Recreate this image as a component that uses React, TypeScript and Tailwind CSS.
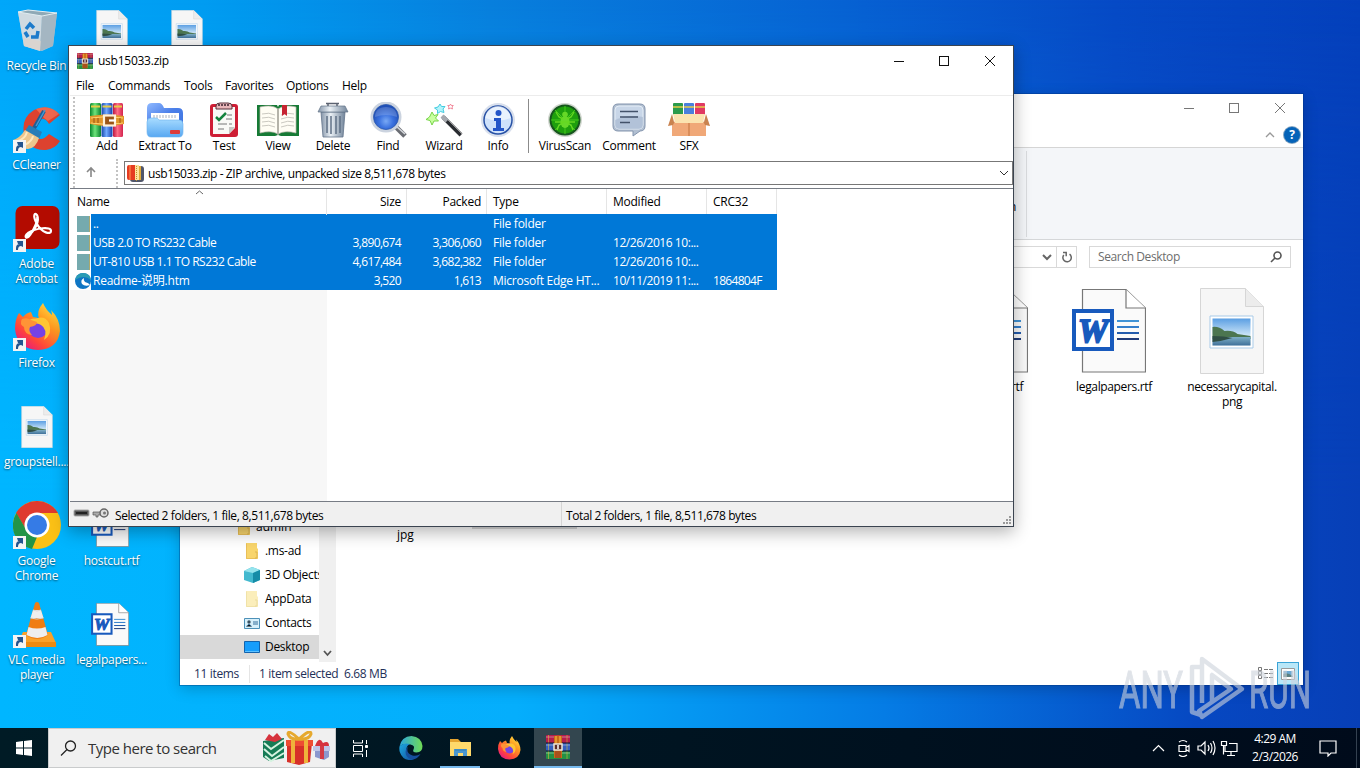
import type { ReactNode } from 'react';

const FONT = "font-['Open_Sans','Noto_Sans_CJK_SC',sans-serif]";

function Books({ className = '' }: { className?: string }) {
  return (
    <svg viewBox="0 0 24 24" className={className}>
      <rect y="0" width="24" height="8" rx="1" fill="#b51d4c" />
      <rect y="8" width="24" height="8" rx="1" fill="#345fc0" />
      <rect y="16" width="24" height="8" rx="1" fill="#239144" />
      <path d="M0 2h24M0 10h24M0 18h24" stroke="#fff" strokeOpacity=".2" strokeWidth="2" />
      <path d="M2.500 0v24M21 0v24" stroke="#e0bd3c" strokeWidth=".8" strokeOpacity=".7" />
      <path d="M0 8h24M0 16h24" stroke="#12162e" strokeWidth="1.200" />
      <path d="M8 1q4-1 8 0v22H8z" fill="#c96b17" />
      <path d="M10 1v8M14 1v8" stroke="#ffbe46" />
      <path d="M9 16h6v7H9z" fill="#a9501c" />
      <rect x="8" y="9" width="8" height="6" fill="#5c2d2a" stroke="#eee7d9" strokeWidth="1.5" />
      <path d="M12 10v4" stroke="#fff" strokeWidth="1.5" />
    </svg>
  );
}

function AddIcon() {
  return (
    <svg viewBox="0 0 36 36" className="size-9">
      <defs>
        <linearGradient id="book-g"><stop stopColor="#08852d" /><stop offset=".45" stopColor="#6ee47b" /><stop offset="1" stopColor="#08802d" /></linearGradient>
        <linearGradient id="book-b"><stop stopColor="#1748aa" /><stop offset=".45" stopColor="#70a9ff" /><stop offset="1" stopColor="#173fad" /></linearGradient>
        <linearGradient id="book-r"><stop stopColor="#bc1741" /><stop offset=".45" stopColor="#ff6d86" /><stop offset="1" stopColor="#d3244f" /></linearGradient>
      </defs>
      <rect x="1" y="1" width="11" height="34" rx="1.5" fill="url(#book-g)" />
      <rect x="12.5" y="1" width="11" height="34" rx="1.5" fill="url(#book-b)" />
      <rect x="24" y="1" width="10" height="34" rx="1.5" fill="url(#book-r)" />
      <path d="M2 4.500h9M13.500 4.500h9M25 4.500h8" stroke="#e7cb47" strokeWidth="2" />
      <path d="M1 14q17-3 34 0v8q-17 4-34 0z" fill="#e0952a" />
      <path d="M2 16q16-3 32 0M2 21q16 3 32 0" fill="none" stroke="#ffd370" />
      <rect x="15" y="13.500" width="11" height="10" fill="#9b5516" stroke="#fff1d7" strokeWidth="2.2" />
      <path d="M20 18.500h7" stroke="#fff" strokeWidth="2.2" />
      <path d="M5 16v5M9 16v5M31 16v5" stroke="#9a5213" />
    </svg>
  );
}

function ExtractIcon() {
  return (
    <svg viewBox="0 0 38 36" className="w-[38px] h-9">
      <defs>
        <linearGradient id="folder" x2="0" y2="1"><stop stopColor="#a8dcff" /><stop offset="1" stopColor="#58a8f2" /></linearGradient>
        <linearGradient id="folder-back" x2="1" y2="1"><stop stopColor="#8fb9ff" /><stop offset=".5" stopColor="#4b7fe9" /><stop offset="1" stopColor="#3f74df" /></linearGradient>
      </defs>
      <path d="M1 6q0-5 5-5h7q3 0 5 5h14q5 0 5 5v15H1z" fill="url(#folder-back)" />
      <path d="M5 11h28v14H5z" fill="#fff" />
      <path d="M8 13v3m3-3v3m3-3v3m3-3v3m3-3v3m3-3v3m3-3v3m3-3v3" stroke="#a8b0bd" />
      <path d="M1 20q0-4 4-4h5q2 0 3 2h20q4 0 4 4v8q0 5-4 5H5q-4 0-4-5z" fill="url(#folder)" stroke="#6db3ee" strokeWidth=".6" />
      <rect x="24" y="28" width="10" height="4" rx="1" fill="#dd3b3b" />
    </svg>
  );
}

function TestIcon() {
  return (
    <svg viewBox="0 0 30 36" className="w-[30px] h-9">
      <rect x="1" y="2" width="28" height="33" rx="3" fill="#ce1e35" />
      <path d="M4 5h22v21l-6 6H4z" fill="#f9f9f6" />
      <path d="M26 25h-6v7z" fill="#c7c7c4" />
      <path d="M7 4q0-3 4-3h8q4 0 4 3v3H7z" fill="#e9b6b9" stroke="#56313a" />
      <path d="M9 3h12" stroke="#664751" strokeWidth="2" strokeDasharray="2 1" />
      <path d="M7 15l3 3 7-7" fill="none" stroke="#14833d" strokeWidth="2.5" />
      <path d="M18 13h5M17 17h6M9 22h9m2 0h3M9 27h6" stroke="#777" />
    </svg>
  );
}

function ViewIcon() {
  return (
    <svg viewBox="0 0 44 36" className="w-11 h-9">
      <path d="M1 3h20l1 2 1-2h20v31H25l-3-1-3 1H1z" fill="#167a35" />
      <path d="M4 5q12-3 18 2v25q-7-4-18-1zM22 7q7-5 18-2v26q-11-3-18 1z" fill="#fffdf4" stroke="#b8b4a9" strokeWidth=".7" />
      <path d="M6 12q7-2 13 1M6 16q7-2 13 1M6 20q7-2 13 1M6 24q7-2 13 1M25 13q7-3 13-1M25 17q7-3 13-1M25 21q7-3 13-1M25 25q7-3 13-1" fill="none" stroke="#cbc9c1" />
      <path d="M22 7v26" stroke="#aaa99e" strokeWidth="1.500" />
      <path d="M26 3h5v11l-2.5-2-2.5 2z" fill="#c72431" />
    </svg>
  );
}

function TrashIcon() {
  return (
    <svg viewBox="0 0 32 36" className="w-8 h-9">
      <defs><linearGradient id="steel"><stop stopColor="#8494a8" /><stop offset=".4" stopColor="#eaf0f5" /><stop offset="1" stopColor="#71849a" /></linearGradient></defs>
      <path d="M9 1.500h13M11 1v3m9-3v3" fill="none" stroke="#5b6270" strokeWidth="1.500" />
      <path d="M4 10h24l-2 25H6z" fill="url(#steel)" stroke="#62748a" strokeWidth=".8" />
      <path d="M10 14v17m4-17v18m5-18v18m4-18v17" stroke="#5f7085" strokeWidth="1.500" />
      <path d="M4 4h24l3 6H1z" fill="url(#steel)" stroke="#617287" strokeWidth=".7" />
    </svg>
  );
}

function FindIcon() {
  return (
    <svg viewBox="0 0 38 36" className="w-[38px] h-9">
      <defs><radialGradient id="lens" cx=".5" cy=".65"><stop stopColor="#79a9f5" /><stop offset=".5" stopColor="#3b72df" /><stop offset="1" stopColor="#1f4fb8" /></radialGradient></defs>
      <path d="M27 25l9 9" stroke="#6a6d73" strokeWidth="5" /><path d="M27 24l9 8" stroke="#d3d6da" strokeWidth="1.600" />
      <circle cx="17" cy="15" r="14" fill="url(#lens)" stroke="#cbd3df" strokeWidth="3" />
      <circle cx="17" cy="15" r="12.500" fill="none" stroke="#2b58ac" strokeWidth=".8" />
      <path d="M6 15q0-10 11-10t11 10q-11-4-22 0" fill="#fff" fillOpacity=".18" />
    </svg>
  );
}

function WizardIcon() {
  return (
    <svg viewBox="0 0 38 36" className="w-[38px] h-9">
      <path d="M18 15l18 18" stroke="#292c31" strokeWidth="4" /><path d="M19 14l18 18" stroke="#999" />
      <path d="M17 14l5 5" stroke="#a6a9af" strokeWidth="4" />
      <path d="M7 10l2 3.500 4-1-2.500 3.500 3 3-4.500 0-2 4-2-4.500-4-1 3.500-2.500z" fill="#c8ff9f" stroke="#79d54a" />
      <path d="M15 2l1.500 2.500h3.500l-2 2.500 1 3.500-3.500-1-3 2v-3.500l-3-2 3.500-1z" fill="#b3f4fb" stroke="#45cce0" />
      <path d="M25.500 2l.8 1.500h2l-1.300 1.500.5 2-2-.8-2 .8.500-2-1.300-1.500h2z" fill="#fff" stroke="#ed7186" strokeWidth=".8" />
    </svg>
  );
}

function InfoIcon() {
  return (
    <svg viewBox="0 0 36 36" className="size-9">
      <circle cx="18" cy="18" r="17" fill="#d9e0ed" /><circle cx="18" cy="18" r="14" fill="#cfe2fb" stroke="#2751a5" strokeWidth="1.5" />
      <path d="M5.500 16a12.500 12 0 0125 0q-12 5-25 0" fill="#fff" fillOpacity=".55" />
      <circle cx="18.5" cy="11" r="3" fill="#2456c8" /><path d="M14 16h7v10h3v3H13v-3h3v-7h-2z" fill="#2456c8" />
    </svg>
  );
}

function VirusIcon() {
  return (
    <svg viewBox="0 0 36 36" className="size-9">
      <circle cx="18" cy="18" r="17" fill="#d1d6cf" /><circle cx="18" cy="18" r="14.500" fill="#1e9f0d" stroke="#16561d" strokeWidth="2" />
      <path d="M18 4v28M4 18h28M8 8l20 20M28 8L8 28" stroke="#4ed522" strokeWidth=".8" />
      <ellipse cx="18" cy="20" rx="4.500" ry="6" fill="#66d829" /><circle cx="18" cy="12.500" r="2.800" fill="#66d827" />
      <path d="M9 10l3 5 4 2M27 10l-3 5-4 2M8 20h20M10 28l2-5 4-2M26 28l-2-5-4-2" fill="none" stroke="#66d822" strokeWidth="1.4" />
    </svg>
  );
}

function CommentIcon() {
  return (
    <svg viewBox="0 0 36 36" className="size-9">
      <path d="M7 2h22q5 0 5 5v17q0 5-5 5l-7 5v-5H7q-5 0-5-5V7q0-5 5-5z" fill="#b1bfd1" stroke="#8495ae" />
      <path d="M8 4h20q4 0 4 4v15q0 4-4 4H8q-4 0-4-4V8q0-4 4-4z" fill="#c8d6e8" stroke="#e5eef7" />
      <path d="M4 18q14-6 28-3v8q0 4-4 4H8q-4 0-4-4z" fill="#91a5c1" fillOpacity=".4" />
      <path d="M9 9.500h18M9 15h18M9 20.500h10" stroke="#435269" strokeWidth="1.6" />
    </svg>
  );
}

function SfxIcon() {
  return (
    <svg viewBox="0 0 42 36" className="w-[42px] h-9">
      <rect x="5" y="1" width="10" height="12" rx="1" fill="#2c9b4c" /><rect x="16" y="1" width="10" height="12" rx="1" fill="#4a80dd" /><rect x="27" y="1" width="10" height="12" rx="1" fill="#e03a63" />
      <path d="M5 5h10M16 5h10M27 5h10" stroke="#e6cb48" strokeWidth="1.500" />
      <path d="M4 20h34v14H4z" fill="#f0a878" />
      <path d="M4 12L0 24l5-1 2-4h28l2 4 5 1-4-12-2 8H6z" fill="#c9834f" />
      <path d="M5 12h32l-2 9H7z" fill="#fbe3b0" /><path d="M21 21v13" stroke="#c3723c" />
    </svg>
  );
}

function PhotoFile({ className = '' }: { className?: string }) {
  return (
    <svg viewBox="0 0 64 86" className={className}>
      <defs>
        <linearGradient id="sky" x2="0" y2="1"><stop stopColor="#5b9fe3" /><stop offset=".7" stopColor="#dbeefa" /></linearGradient>
        <linearGradient id="lake" x2="0" y2="1"><stop stopColor="#7fb0c8" /><stop offset="1" stopColor="#3f7099" /></linearGradient>
      </defs>
      <path d="M.5.5h45l18 18v67H.5z" fill="#f6f6f6" stroke="#d6d6d6" />
      <path d="M45.5.5v18h18" fill="#ececec" stroke="#d6d6d6" />
      <path d="M10 28h43v32H10z" fill="#fff" stroke="#a9cbe8" />
      <path d="M12.500 30.500h38v27h-38z" fill="url(#sky)" />
      <path d="M12.500 39q6-1 12 4 8-1 13 3l13 2v3h-38z" fill="#4c7650" />
      <path d="M12.500 49h38v8.500h-38z" fill="url(#lake)" /><path d="M12.500 48q12 0 20 2-10 3-20 4z" fill="#304f45" />
    </svg>
  );
}

function WordFile({ className = '' }: { className?: string }) {
  return (
    <svg viewBox="0 0 74 84" className={className}>
      <path d="M10.5.5H54L73.5 19v64h-63z" fill="#fafafa" stroke="#777" strokeWidth="1.2" />
      <path d="M54 .5V19h19.5" fill="#fff" stroke="#777" strokeWidth="1.2" />
      <path d="M45 32h22" stroke="#4193d5" strokeWidth="2" /><path d="M45 38h22" stroke="#347fcc" strokeWidth="2" />
      <path d="M45 44h22" stroke="#245cad" strokeWidth="2" /><path d="M45 50h22" stroke="#203b79" strokeWidth="2" />
      <rect x="2" y="22" width="38" height="38" fill="#fff" stroke="#185abd" strokeWidth="4" />
      <text x="21" y="52.500" textAnchor="middle" fontFamily="Liberation Serif" fontWeight="700" fontStyle="italic" fontSize="34" fill="#185abd" stroke="#185abd" strokeWidth="2">W</text>
    </svg>
  );
}

function RecycleIcon() {
  return (
    <svg viewBox="0 0 48 48" className="size-12">
      <path d="M5 6l10-2 29 3-4 33-11 5-18-5z" fill="#bac9d2" fillOpacity=".85" />
      <path d="M5 6l24 4-2 35-16-5z" fill="#cfdae1" /><path d="M29 10l15-3-4 33-13 5z" fill="#a4b6c2" />
      <path d="M5 6l10-2 29 3-15 3z" fill="#8fa9b6" stroke="#e2edf1" />
      <path d="M10 32l18 3-1 10-16-5z" fill="#ddd2c9" fillOpacity=".7" />
      <g fill="none" stroke="#1c7bcb" strokeWidth="3.500"><path d="M13 23l4-5 4 4" /><path d="M25 25l-1 6-6 0" /><path d="M15 31l-3-5" /></g>
    </svg>
  );
}

function CCleanerIcon() {
  return (
    <svg viewBox="0 0 48 48" className="size-12">
      <path d="M47 10Q36-2 21 5 8 13 11 29q5 17 22 16 9-1 14-9l-11-7q-9 10-15 0-2-13 6-15 6-1 9 5z" fill="#dd422f" />
      <path d="M23 4q14-5 23 5l-11 7-4-3" fill="#ef674e" />
      <path d="M31 6L20 25" stroke="#1c5f97" strokeWidth="4" /><path d="M32 5L23 21" stroke="#4698cf" strokeWidth="1.5" />
      <path d="M16 20l13 7-3 7-14-8z" fill="#287db8" />
      <path d="M12 25l14 8q-3 10-11 11Q5 44 0 35q7-2 12-10z" fill="#edc68d" />
      <path d="M5 36q7-2 9-9M12 40q7-4 8-9" fill="none" stroke="#ffe8bd" strokeWidth="2" />
    </svg>
  );
}

function AcrobatIcon() {
  return (
    <svg viewBox="0 0 48 48" className="size-12">
      <rect x="2.500" y="2" width="44" height="43" rx="7" fill="#b30b00" />
      <path d="M13 33C22 28 27 17 24 11c-2-3-5 0 0 9s14 11 14 7c0-5-15-3-23 2-5 4-1 7 2 2 5-7 8-15 7-18" fill="none" stroke="#fff" strokeWidth="2.2" strokeLinejoin="round" />
    </svg>
  );
}

function FirefoxIcon({ className = '' }: { className?: string }) {
  return (
    <svg viewBox="0 0 48 48" className={className}>
      <defs>
        <linearGradient id="fox" x1="1" y1="0" x2=".2" y2="1"><stop stopColor="#fff44f" /><stop offset=".4" stopColor="#ff9a20" /><stop offset=".75" stopColor="#ff453a" /><stop offset="1" stopColor="#e31587" /></linearGradient>
      </defs>
      <path d="M30 0q3 7 9 12 0-3-1-5 9 9 9 21Q45 46 25 47 4 46 2 26q0-10 4-16l4 4q3-4 8-5l2 5q4 0 6 2Q23 8 30 0z" fill="url(#fox)" />
      <circle cx="25" cy="25" r="10" fill="#7542e5" />
      <path d="M25 15q7-2 11 5 4 11-5 17 4-11-3-15-4-3-9 0-1-4-5-4 5-3 11-3z" fill="#ffc533" />
      <path d="M9 16q5-2 9 1l6 2q0 4-7 5-2 4 2 8-8-1-8-8-5-3-2-8z" fill="#ff9336" />
    </svg>
  );
}

function ChromeIcon() {
  return (
    <svg viewBox="0 0 48 48" className="size-12">
      <circle cx="24" cy="24" r="24" fill="#fbc116" />
      <path d="M24 0a24 24 0 0121 12H24a12 12 0 00-10 18L3 12A24 24 0 0124 0z" fill="#df3a2f" />
      <path d="M3.4 12L14 30a12 12 0 0010 6l-5 12A24 24 0 013.400 12z" fill="#239447" />
      <circle cx="24" cy="24" r="12.500" fill="#fff" /><circle cx="24" cy="24" r="10" fill="#357be6" />
    </svg>
  );
}

function VlcIcon() {
  return (
    <svg viewBox="0 0 48 48" className="size-12">
      <path d="M10 32h28l5 11H5z" fill="#f9a12a" /><path d="M5 42h38v5H5z" fill="#ee8a10" />
      <path d="M22 3q2-2 4 0l9 32q-11 8-22 0z" fill="#f07d12" />
      <path d="M20 10h8l2.500 8h-13zM15.500 27q8.500 3 17 0l2 8q-10 6-21 0z" fill="#eee" />
      <path d="M20 10q4 2 8 0M17.500 18q6 2 13 0" stroke="#d7d7d7" fill="none" />
    </svg>
  );
}

function EdgeIcon({ className = '' }: { className?: string }) {
  return (
    <svg viewBox="0 0 48 48" className={className}>
      <defs>
        <linearGradient id="edge-top" x2="1"><stop stopColor="#2aa5df" /><stop offset="1" stopColor="#70dc55" /></linearGradient>
        <linearGradient id="edge-low" x2="1" y2="1"><stop stopColor="#1eaae2" /><stop offset="1" stopColor="#124d9c" /></linearGradient>
      </defs>
      <path d="M1 21Q5 1 25 0q20 2 22 20 0 12-12 13-9 0-6-6 4-8-6-10Q8 14 1 21z" fill="url(#edge-top)" />
      <path d="M1 21q8-9 21-5-9 4-7 16 2 12 16 16Q8 51 2 33q-2-5-1-12z" fill="url(#edge-low)" />
      <path d="M18 21q-5 14 9 18 9 2 16-3-8 13-20 10Q9 39 15 25z" fill="#164f9d" />
    </svg>
  );
}

// the selected row shows a blue-tinted edge icon
function EdgeSelected() {
  return (
    <svg viewBox="0 0 16 16" className="ml-[5px] size-4 shrink-0">
      <circle cx="8" cy="8" r="8" fill="#0f76c4" />
      <path d="M0 7Q2 0 8 0q7 0 8 7-7-6-16 0z" fill="#2b9cb4" />
      <path d="M9 5Q5 7 7 11q3 3 8 1-1-2-5-3-2-2-1-4z" fill="#fff" />
    </svg>
  );
}

function Shortcut() {
  return (
    <svg viewBox="0 0 13 13" className="absolute bottom-0 left-0 size-[13px]">
      <rect width="13" height="13" fill="#f4f4f4" />
      <path d="M3 11V9q0-4 4-4H5l-1-3h6v6L8 7Q5 7 5 11z" fill="#24558f" />
    </svg>
  );
}

function DesktopItem({ icon, label, link }: { icon?: ReactNode; label?: string; link?: boolean }) {
  return (
    <div className="flex h-[99px] w-[75px] flex-col items-center">
      <div className="relative flex size-12 items-center justify-center">
        {icon}
        {link && <Shortcut />}
      </div>
      <div className="mt-1 whitespace-pre text-center text-[12px] leading-[15px] tracking-[-0.25px] text-white [text-shadow:0_1px_2px_rgba(0,0,0,.6)]">
        {label}
      </div>
    </div>
  );
}

function Desktop() {
  return (
    <div className="absolute left-[-1px] top-[6px] flex">
      <div className="flex flex-col">
        <DesktopItem icon={<RecycleIcon />} label="Recycle Bin" />
        <DesktopItem icon={<CCleanerIcon />} label="CCleaner" link />
        <DesktopItem icon={<AcrobatIcon />} label={'Adobe\nAcrobat'} link />
        <DesktopItem icon={<FirefoxIcon className="size-12" />} label="Firefox" link />
        <DesktopItem icon={<PhotoFile className="mt-[2px] h-[42px] w-8" />} label="groupstell...." />
        <DesktopItem icon={<ChromeIcon />} label={'Google\nChrome'} link />
        <DesktopItem icon={<VlcIcon />} label={'VLC media\nplayer'} link />
      </div>
      <div className="flex flex-col">
        <DesktopItem icon={<PhotoFile className="mt-[2px] h-[42px] w-8" />} />
        <DesktopItem />
        <DesktopItem />
        <DesktopItem />
        <DesktopItem />
        <DesktopItem icon={<WordFile className="mr-1 h-[43px] w-[38px]" />} label="hostcut.rtf" />
        <DesktopItem icon={<WordFile className="mr-1 h-[43px] w-[38px]" />} label="legalpapers..." />
      </div>
      <DesktopItem icon={<PhotoFile className="mt-[2px] h-[42px] w-8" />} />
    </div>
  );
}

function WindowButtons({ color }: { color: string }) {
  return (
    <svg width="102" height="12" viewBox="0 0 102 12" fill="none" stroke={color} shapeRendering="crispEdges">
      <path d="M0 6.500h10M45.500 1.500h9v9h-9z" />
      <path d="M91 1l10 10M101 1L91 11" shapeRendering="auto" />
    </svg>
  );
}

function SmallFolder({ pale }: { pale?: boolean }) {
  return (
    <svg viewBox="0 0 16 16" className="size-4 shrink-0">
      <path d="M2 0h11v5l1 1v10H2z" fill={pale ? '#fbeebb' : '#f8d56c'} />
      <path d="M2.500.5v15h10" fill="none" stroke={pale ? '#f0e2a8' : '#e9bf58'} />
      <path d="M11 9h2v6h-2" fill="none" stroke={pale ? '#eadb9e' : '#dcb34e'} />
    </svg>
  );
}

const tree = [
  { label: '.ms-ad', icon: <SmallFolder /> },
  {
    label: '3D Objects',
    icon: (
      <svg viewBox="0 0 16 16" className="size-4 shrink-0">
        <path d="M0 4l8-4 8 3v10l-7 3-9-3z" fill="#43b9cf" /><path d="M0 4l8-4 8 3-7 3z" fill="#96e4ed" /><path d="M9 6l7-3v10l-7 3z" fill="#168ca7" />
      </svg>
    ),
  },
  { label: 'AppData', icon: <SmallFolder pale /> },
  {
    label: 'Contacts',
    icon: (
      <svg viewBox="0 0 16 16" className="size-4 shrink-0">
        <path d="M.5 3.500h15v10H.5z" fill="#d7f0fb" stroke="#4d91b8" /><circle cx="5" cy="7" r="1.700" fill="#3b5262" /><path d="M2.500 11.500q2.500-4 5 0M9 7h5M9 9h5" stroke="#356f9b" />
      </svg>
    ),
  },
  {
    label: 'Desktop',
    icon: (
      <svg viewBox="0 0 16 16" className="size-4 shrink-0">
        <path d="M.5 2.500h15v11H.5z" fill="#169dfc" stroke="#1263ae" /><path d="M1 12.500h14" stroke="#5cc2ff" />
      </svg>
    ),
  },
];

function Explorer() {
  return (
    <div className="absolute left-[180px] top-[94px] flex h-[591px] w-[1123px] flex-col bg-white shadow-[0_0_0_1px_rgba(0,50,120,.35),0_4px_14px_rgba(0,0,0,.2)]">
      <div className="flex h-7 justify-end pr-[17px] pt-2">
        <WindowButtons color="#777" />
      </div>
      <div className="flex h-[26px] items-center justify-end gap-[9px] border-b border-[#d5d5d5] pr-[3px]">
        <svg width="10" height="6" fill="none" stroke="#999" strokeWidth="1.3"><path d="M1 5l4-4 4 4" /></svg>
        <span className="flex size-4 items-center justify-center rounded-full bg-[#0563b8] text-[12px] font-bold leading-none text-white ring-1 ring-[#084983]/50">?</span>
      </div>
      <div className="flex h-[92px] border-b border-[#d5d7d9] bg-[#f4f6f9]">
        <div className="mt-[3px] h-[86px] w-[847px] border-r border-[#dadcdf] pl-[829px] pt-[47px] text-[12px]">n</div>
      </div>
      <div className="flex h-[34px] items-center justify-end pr-3">
        <div className="flex h-[22px] w-[720px] items-center justify-end border border-[#d9d9d9]">
          <svg width="10" height="7" className="mr-1" fill="none" stroke="#666" strokeWidth="2"><path d="M1 1l4 4 4-4" /></svg>
          <div className="flex h-full w-5 items-center justify-center border-l border-[#d9d9d9]">
            <svg width="12" height="12" fill="none" stroke="#666" strokeWidth="1.500"><path d="M8.500 3.200A4.200 4.200 0 112.800 4M2 1.500h3.200v3.700" /></svg>
          </div>
        </div>
        <div className="ml-3 flex h-[22px] w-[202px] items-center justify-between border border-[#d9d9d9] pl-2 pr-2 text-[12px] tracking-[-0.4px] text-[#6d6d6d]">
          <span>Search Desktop</span>
          <svg width="12" height="12" fill="none" stroke="#555" strokeWidth="1.600"><circle cx="7.500" cy="4.500" r="3.500" /><path d="M5 7l-4 4" /></svg>
        </div>
      </div>
      <div className="flex min-h-0 flex-1">
        <div className="flex w-[139px] flex-col justify-end overflow-hidden pb-[3px] text-[12px] tracking-[-0.3px]">
          <div className="flex h-6 items-center gap-1 pl-14 tracking-normal"><SmallFolder />admin</div>
          {tree.map((item) => (
            <div
              key={item.label}
              className={`flex h-6 shrink-0 items-center gap-[5px] whitespace-nowrap pl-16 ${item.label === 'Desktop' ? 'bg-[#d9d9d9]' : ''}`}
            >
              {item.icon}
              {item.label}
            </div>
          ))}
        </div>
        <div className="flex w-[17px] flex-col items-center justify-end bg-[#f0f0f0] pb-[5px]">
          <svg width="9" height="7" fill="none" stroke="#555" strokeWidth="1.800"><path d="M1 1l3.500 4L8 1" /></svg>
        </div>
        <div className="flex flex-1 flex-col justify-between">
          <div className="flex justify-end pt-[14px] text-center text-[12px] leading-[15px] tracking-[-0.35px]">
            <div className="flex w-[118px] flex-col items-center">
              <WordFile className="mr-[11px] h-[86px] w-[74px]" />
              <span className="mt-[5px] w-full">hostcut.rtf</span>
            </div>
            <div className="flex w-[118px] flex-col items-center">
              <WordFile className="mr-[11px] h-[86px] w-[74px]" />
              <span className="mt-[5px]">legalpapers.rtf</span>
            </div>
            <div className="mr-[12px] flex w-[118px] flex-col items-center">
              <PhotoFile className="h-[86px] w-16" />
              <span className="mt-[5px]">necessarycapital.<br />png</span>
            </div>
          </div>
          <div className="flex h-[135px] items-start pl-[61px] text-[12px] leading-[15px]">
            <span>jpg</span>
            <div className="ml-[58px] h-[2px] w-[105px] bg-[#d9d9d9]" />
          </div>
        </div>
      </div>
      <div className="flex h-[23px] items-center pl-[14px] pr-[4px] text-[12px] tracking-[-0.35px] text-[#1e3058]">
        <span className="w-[55px]">11 items</span>
        <span className="w-[95px] whitespace-nowrap border-l border-[#e5e5e5] pl-[9px]">1 item selected</span>
        <span className="flex-1">6.68 MB</span>
        <svg width="17" height="13" className="mr-[3px]" fill="none" stroke="#777"><path d="M1.500.5h3v3h-3zM1.500 4.500h3v3h-3zM1.500 8.500h3v3h-3z" /><path d="M7 2.500h9M7 6.500h9M7 10.500h9" strokeDasharray="4 1" /></svg>
        <div className="flex h-full w-[22px] items-center justify-center border border-[#3ba4d7] bg-[#b9e7f8]">
          <svg width="14" height="12"><path d="M.5.5h13v11H.5z" fill="#fff" stroke="#999" /><path d="M2.500 3h9v6h-9z" fill="#6ba9d4" /><path d="M2.500 6q4-2 9 2v1h-9z" fill="#5a7f80" /></svg>
        </div>
      </div>
    </div>
  );
}

const actions = [
  { label: 'Add', icon: <AddIcon />, cell: 'w-[52px]' },
  { label: 'Extract To', icon: <ExtractIcon />, cell: 'w-[64px]' },
  { label: 'Test', icon: <TestIcon />, cell: 'w-[54px]' },
  { label: 'View', icon: <ViewIcon />, cell: 'w-[54px]' },
  { label: 'Delete', icon: <TrashIcon />, cell: 'w-[56px]' },
  { label: 'Find', icon: <FindIcon />, cell: 'w-[54px]' },
  { label: 'Wizard', icon: <WizardIcon />, cell: 'w-[58px]' },
  { label: 'Info', icon: <InfoIcon />, cell: 'w-[50px]' },
];

const scanActions = [
  { label: 'VirusScan', icon: <VirusIcon />, cell: 'w-[62px]' },
  { label: 'Comment', icon: <CommentIcon />, cell: 'w-[66px]' },
  { label: 'SFX', icon: <SfxIcon />, cell: 'w-[54px]' },
];

function Action({ label, icon, cell }: { label: string; icon: ReactNode; cell: string }) {
  return (
    <div className={`flex shrink-0 flex-col items-center ${cell}`}>
      {icon}
      <span className="whitespace-nowrap leading-[16px]">{label}</span>
    </div>
  );
}

const files = [
  ['..', '', '', 'File folder', '', ''],
  ['USB 2.0 TO RS232 Cable', '3,890,674', '3,306,060', 'File folder', '12/26/2016 10:...', ''],
  ['UT-810 USB 1.1 TO RS232 Cable', '4,617,484', '3,682,382', 'File folder', '12/26/2016 10:...', ''],
  ['Readme-说明.htm', '3,520', '1,613', 'Microsoft Edge HT...', '10/11/2019 11:...', '1864804F'],
];

const COLS = 'grid grid-cols-[257px_80px_80px_120px_100px_70px]';

function Archive() {
  return (
    <div className="absolute left-[68px] top-[45px] flex h-[482px] w-[946px] flex-col border border-[#3b4450] bg-white pl-px text-[12px] tracking-[-0.25px] text-black shadow-[0_5px_16px_rgba(0,0,0,.3)]">
      <div className="flex h-[30px] items-center pb-px pl-[7px] pr-[17px]">
        <Books className="size-4" />
        <span className="ml-[5px] flex-1 pt-px">usb15033.zip</span>
        <WindowButtons color="#111" />
      </div>
      <div className="flex h-5 items-center border-b border-[#ececec] pl-[6px] pt-px">
        <span className="w-8">File</span>
        <span className="w-[76px]">Commands</span>
        <span className="w-[41px]">Tools</span>
        <span className="w-[61px]">Favorites</span>
        <span className="w-[56px]">Options</span>
        <span>Help</span>
      </div>
      <div className="flex h-[63px] pl-[3px] pt-[1px]">
        <div className="mr-[6px] w-0 border-l-2 border-dotted border-[#c3c3c3]" />
        <div className="flex pt-[5px]">
          {actions.map((a) => <Action key={a.label} {...a} />)}
          <div className="mx-[5px] mt-[-3px] h-[54px] w-px bg-[#8b8b8b]" />
          {scanActions.map((a) => <Action key={a.label} {...a} />)}
        </div>
      </div>
      <div className="flex h-[29px] pl-[3px]">
        <div className="w-[45px] border-x-2 border-dotted border-[#c3c3c3] pl-[10px] pt-[7px]">
          <svg width="12" height="12" fill="none" stroke="#888" strokeWidth="1.600"><path d="M6 11V2M2 6l4-4 4 4" /></svg>
        </div>
        <div className="ml-[6px] mt-[2px] flex h-6 flex-1 items-center border border-[#777] pl-[2px] pr-[3px]">
          <svg viewBox="0 0 17 17" className="size-[17px]">
            <rect x="3" y="1" width="14" height="16" rx="3" fill="#50566a" /><rect width="10" height="15" rx="2" fill="#e63c21" /><path d="M3 0v15" stroke="#f87a43" strokeWidth="1.500" /><path d="M8 0h4v15H8z" fill="#ffe29a" /><path d="M9.500 1v15" stroke="#b79231" strokeDasharray="1 1" /><path d="M12 1h2v14h-2z" fill="#e0aa38" />
          </svg>
          <span className="ml-[4px] flex-1 pt-px tracking-[-0.41px]">usb15033.zip - ZIP archive, unpacked size 8,511,678 bytes</span>
          <svg width="10" height="6" fill="none" stroke="#333"><path d="M1 1l4 4 4-4" /></svg>
        </div>
      </div>
      <div className="relative flex min-h-0 flex-1 flex-col border-b border-t border-[#777c85]">
        <div className={`${COLS} h-[25px] items-stretch leading-[26px]`}>
          <span className="relative border-r border-[#e5e5e5] pl-[7px]">
            Name
            <svg width="9" height="5" className="absolute left-[125px] top-px" fill="none" stroke="#666"><path d="M1 4l3.500-3L8 4" /></svg>
          </span>
          <span className="border-r border-[#e5e5e5] pr-[5px] text-right">Size</span>
          <span className="border-r border-[#e5e5e5] pr-[5px] text-right">Packed</span>
          <span className="border-r border-[#e5e5e5] pl-[6px]">Type</span>
          <span className="border-r border-[#e5e5e5] pl-[6px]">Modified</span>
          <span className="border-r border-[#e5e5e5] pl-[6px]">CRC32</span>
        </div>
        {files.map((file) => (
          <div key={file[0]} className={`${COLS} h-[19px] w-[707px] whitespace-nowrap bg-[linear-gradient(90deg,#fff_21px,#0078d7_21px)] leading-[19px] text-white`}>
            <div className="flex items-center">
              {file[5] ? <EdgeSelected /> : <span className="ml-[7px] h-4 w-[13px] border-r border-[#a9a86e] bg-[#75aaae]" />}
              <span className={file[5] ? 'ml-[2px]' : 'ml-[3px] tracking-[-0.5px]'}>{file[0]}</span>
            </div>
            <span className="pr-[6px] text-right tracking-[-0.65px]">{file[1]}</span>
            <span className="pr-[6px] text-right tracking-[-0.65px]">{file[2]}</span>
            <span className="pl-[6px]">{file[3]}</span>
            <span className="pl-[6px] tracking-[-0.45px]">{file[4]}</span>
            <span className="pl-[6px] tracking-[-0.7px]">{file[5]}</span>
          </div>
        ))}
        <div className="w-[257px] flex-1 bg-[#f7f7f7]" />
      </div>
      <div className="relative flex h-6 items-center bg-[#f0f0f0] tracking-[-0.41px]">
        <svg width="40" height="14" viewBox="0 0 40 14" className="ml-[2px]">
          <rect x="2" y="3" width="15" height="6" rx="1" fill="#555" stroke="#aaa" /><path d="M4 6h11" stroke="#222" strokeWidth="2" />
          <path d="M21 5h8v3h-3v2h-2V8h-3z" fill="#aaa" stroke="#555" strokeWidth=".7" /><circle cx="32" cy="6" r="4" fill="#ddd" stroke="#666" strokeWidth="1.500" /><circle cx="32.500" cy="6" r="1.500" fill="#777" />
        </svg>
        <span className="h-full w-[450px] border-r border-[#d5d5d5] pl-[3px] pt-[5px] leading-[18px]">Selected 2 folders, 1 file, 8,511,678 bytes</span>
        <span className="h-full pl-[4px] pt-[5px] leading-[18px]">Total 2 folders, 1 file, 8,511,678 bytes</span>
        <svg width="10" height="10" className="absolute bottom-px right-px" fill="#999"><path d="M7 1h2v2H7zM4 4h2v2H4zM7 4h2v2H7zM1 7h2v2H1zM4 7h2v2H4zM7 7h2v2H7z" /></svg>
      </div>
    </div>
  );
}

function Gifts() {
  return (
    <svg width="70" height="34" viewBox="0 0 70 34">
      <path d="M1 10l21-3v20l-15 3-6-4z" fill="#157b55" /><path d="M2 12l7 6L22 9M2 18l8 7 12-9M3 25l6 5 13-8" fill="none" stroke="#d5f3e0" strokeWidth="2" />
      <path d="M3 9l4-6 4 3 4-4 5 6-7 3z" fill="#d6333d" />
      <path d="M25 12h25l-2 19-11 3-12-3z" fill="#d73029" /><path d="M24 9h27v6H24z" fill="#ee4c33" /><path d="M29 9h4v23h-4zM42 9h4v23h-4z" fill="#efb43b" />
      <path d="M37 8Q26-2 26 3q2 6 11 5Q49-3 49 3q-2 6-12 5" fill="none" stroke="#e6a92e" strokeWidth="3" />
      <path d="M53 18h14v8l-5 3-9-3z" fill="#8b97ce" /><path d="M51 15h17v5H51z" fill="#bfc5e7" /><path d="M58 14h4v14h-4z" fill="#d23b47" /><path d="M53 15q4-11 8-3 6-3 6 3" fill="#d6323e" />
    </svg>
  );
}

function Taskbar() {
  return (
    <div className="absolute bottom-0 left-0 flex h-10 w-full items-center bg-linear-to-r from-[#001b25] via-[#001421] to-[#000b1b] text-white">
      <div className="flex w-12 justify-center">
        <svg width="16" height="16" fill="#fff"><path d="M0 2l7-1v6.500H0zM8 1l8-1v7.500H8zM0 8.500h7V15l-7-1zM8 8.500h8V16l-8-1z" /></svg>
      </div>
      <div className="flex h-full w-72 items-center border border-[#c9cbcc] bg-[#f0f0f0] pl-[11px] text-[#333]">
        <svg width="17" height="17" fill="none" stroke="#222" strokeWidth="1.300"><circle cx="10.500" cy="6" r="5" /><path d="M7 9.500l-6 6" /></svg>
        <span className="ml-[11px] flex-1 whitespace-nowrap text-[15px] tracking-[-0.5px]">Type here to search</span>
        <Gifts />
        <span className="w-[3px]" />
      </div>
      <div className="flex w-12 justify-center">
        <svg width="17" height="17" fill="none" stroke="#fff"><path d="M1.500 0v3h9V0M1.500 5.500h9v6h-9zM1.500 17v-3h9v3M14.500 0v4m0 6v7" /><path d="M13.500 5.500h2v2h-2z" fill="#fff" /></svg>
      </div>
      <div className="flex w-[54px] justify-center"><EdgeIcon className="size-6" /></div>
      <div className="ml-[2px] flex h-full w-10 items-center justify-center border-b-2 border-[#76b9ed]">
        <svg width="23" height="19" viewBox="0 0 23 19">
          <path d="M1 1h8l3 3h10v14H1z" fill="#e5a42f" /><path d="M1 4h21v14H1z" fill="#ffd96b" /><path d="M5 11h13v7h-4v-3H9v3H5z" fill="#4b97cf" /><path d="M6 12h11" stroke="#2f7fb8" />
        </svg>
      </div>
      <div className="ml-[5px] flex w-12 justify-center"><FirefoxIcon className="size-6" /></div>
      <div className="ml-[1px] flex h-full w-12 items-center justify-center border-b-2 border-[#76b9ed] bg-[#33464f]"><Books className="size-6" /></div>
      <div className="ml-auto flex h-full items-center">
        <svg width="88" height="18" viewBox="0 0 88 18" fill="none" stroke="#fff" strokeWidth="1.200">
          <path d="M1 12l5.500-5.500L12 12" />
          <path d="M27 6.500h7v6h-7zM34 8.500l3-2v6l-3-2M27 3q4-3 8 0M27 16q4 3 8 0" />
          <path d="M46 7h3l4-4v12l-4-4h-3zM56 6q2 3 0 6M58.500 4q3 5 0 10M61 2q4 7 0 14" />
          <path d="M69.500 2.500h5v4h-5zM77 4.500h8v8H73v-6M71.500 6.500v9M75 16.500h8M79 13v3" />
        </svg>
        <div className="ml-[9px] w-[52px] text-center text-[12px] leading-[18px] tracking-[-0.5px]">4:29 AM<br />2/3/2026</div>
        <svg width="18" height="18" className="ml-[18px] mr-[19px]" fill="none" stroke="#fff" strokeWidth="1.200"><path d="M1 2h16v12h-5l-3 3v-3H1z" /></svg>
        <div className="mr-[3px] h-full w-px bg-[#344150]" />
      </div>
    </div>
  );
}

function Watermark() {
  return (
    <svg width="194" height="66" viewBox="0 0 194 66" className="absolute left-[1118px] top-[655px] opacity-60">
      <g fill="#cdd3dc" stroke="#cdd3dc" fontFamily="Roboto" fontSize="52" strokeWidth="1.200">
        <text x="1" y="53" textLength="64" lengthAdjust="spacingAndGlyphs">ANY</text>
        <text x="131" y="53" textLength="62" lengthAdjust="spacingAndGlyphs">RUN</text>
      </g>
      <g fill="none" stroke="#cdd3dc" strokeWidth="4.500" strokeLinejoin="round">
        <path d="M82 12h-8v45l9 3" />
        <path d="M84 48V4l40 30-40 28-3-6 32-22-19-14v27" />
      </g>
    </svg>
  );
}

export default function App() {
  return (
    <div className={`relative h-[768px] w-[1360px] overflow-hidden bg-[linear-gradient(90deg,#00a7fa_0%,#009cf1_15%,#087fdd_36%,#0762d3_62%,#064ac6_82%,#0440bc_100%)] ${FONT}`}>
      <div className="absolute inset-0 bg-[linear-gradient(90deg,#00b6ff_0%,#05aefc_38%,#057ce5_65%,#0648c2_88%,#073fb7_100%)] [mask-image:linear-gradient(to_bottom,transparent,black_65%)]" />
      <Desktop />
      <Explorer />
      <Archive />
      <Watermark />
      <Taskbar />
    </div>
  );
}
